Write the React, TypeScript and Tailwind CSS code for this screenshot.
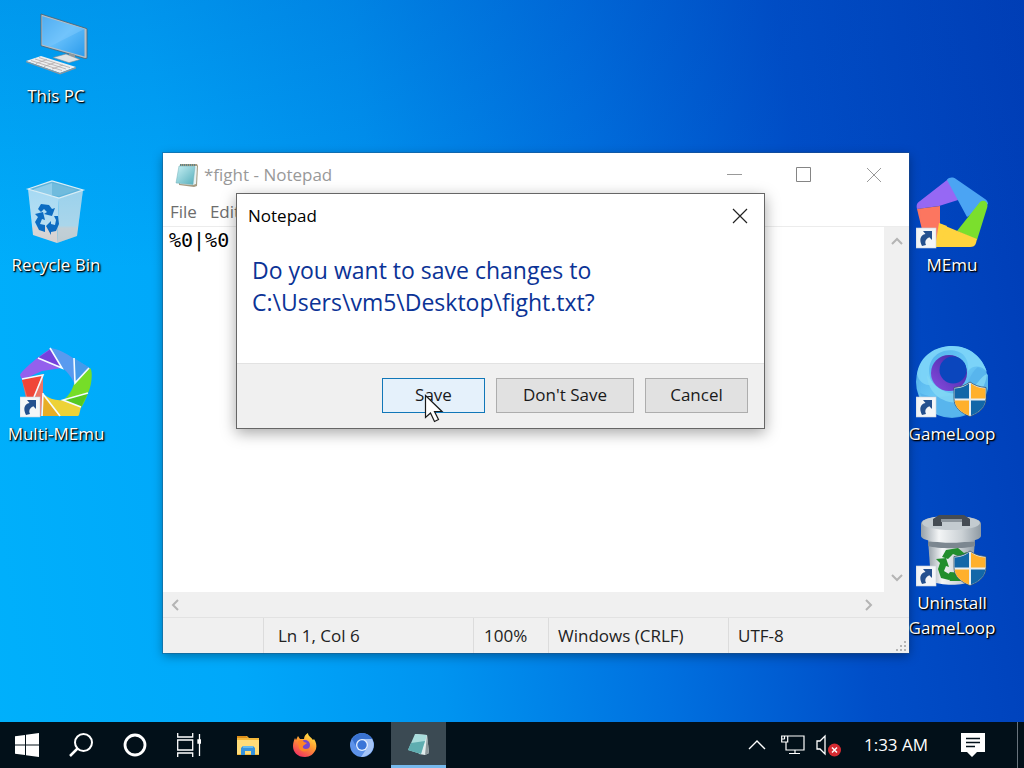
import { useState, type ReactNode } from 'react';

interface IconProps {
  className?: string;
}

interface DesktopIconProps {
  label: string;
  children: ReactNode;
}

interface TaskButtonProps {
  label: string;
  active?: boolean;
  children: ReactNode;
}

function ShortcutArrow() {
  return (
    <g>
      <rect x="0" y="51" width="20" height="20" fill="#f4f6f8" stroke="#c9d3dc" strokeWidth="0.6" />
      <path d="M6 69C3 63 4 58 9.500 57L7 54h9v9l-2.700-2.700C9.500 62 8.500 65 10 68z" fill="#24508e" />
    </g>
  );
}

function Shield() {
  return (
    <g>
      <path d="M54 36c-4 3-9 5-16 5.500v11c0 9 7 14.500 16 18 9-3.500 16-9 16-18v-11C63 41 58 39 54 36z" fill="#e8eef0" stroke="#33506b" strokeWidth="0.8" />
      <path d="M53 37.500c-4 3-8 4.500-14.400 5V52.500H53z" fill="#1267a8" />
      <path d="M55 37.500c4 3 8 4.500 14.400 5V52.500H55z" fill="#ffb02c" />
      <path d="M38.700 54.500H53v15C44.500 66 39.300 61.500 38.700 54.500z" fill="#ffb02c" />
      <path d="M69.300 54.500H55v15C63.500 66 68.700 61.500 69.300 54.500z" fill="#1267a8" />
    </g>
  );
}

function ThisPcIcon() {
  return (
    <svg viewBox="0 0 72 72" className="size-[72px]" aria-hidden="true">
      <defs>
        <linearGradient id="pc-screen" x1="0" y1="0" x2="1" y2="1">
          <stop offset="0" stopColor="#2f9bea" />
          <stop offset="0.5" stopColor="#62bdfa" />
          <stop offset="1" stopColor="#2a9bec" />
        </linearGradient>
      </defs>
      <path d="M21 6l44 14 2 .8v29.400l-2 .3-44-12.700z" fill="#b7bfc5" stroke="#4b6070" strokeWidth="0.8" />
      <path d="M22.300 8.200L64.500 21v27.500L22.300 36.500z" fill="url(#pc-screen)" />
      <path d="M22.300 8.200L64.500 21 30 38.500l-7.700-2z" fill="#8fd0ff" opacity="0.35" />
      <path d="M49 45l6 1.800v3.500l-6-1z" fill="#8d999f" />
      <path d="M33 49.500l13-3.500 14 5.500-11 3.200z" fill="#dfe3e5" stroke="#7c8992" strokeWidth="0.6" />
      <path d="M6 53l15-5 35 11-16 6z" fill="#eceeef" />
      <path d="M6 53l34 12 16-6v1.500L40 66.500 6 54.300z" fill="#8c969d" />
      <path d="M11 52.500l31 10M15 51l31 10M19 49.600l31 10M16 55.500l11-4M24 58.500l11-4M32 61l11-4" stroke="#b1a9a9" strokeWidth="0.8" fill="none" />
    </svg>
  );
}

function RecycleBinIcon() {
  return (
    <svg viewBox="0 0 72 72" className="size-[72px]" aria-hidden="true">
      <defs>
        <linearGradient id="bin-front" x1="0" y1="0" x2="0" y2="1">
          <stop offset="0" stopColor="#a5d9f3" />
          <stop offset="0.67" stopColor="#b9dff2" />
          <stop offset="0.72" stopColor="#d9d7d7" />
          <stop offset="1" stopColor="#d5d1d0" />
        </linearGradient>
      </defs>
      <path d="M8 12l24-8 31 9-24 8z" fill="#5fb4dc" />
      <path d="M13 12.500L32 6v12l-7 1z" fill="#8fcdea" />
      <path d="M32 6l25 7-18 6-7-1z" fill="#70bbdd" />
      <path d="M8 12l31 9-2 45-24-8z" fill="url(#bin-front)" />
      <path d="M39 21l24-8-6 46-20 7z" fill="url(#bin-front)" />
      <path d="M39 21l24-8-6 46-20 7z" fill="#7cbbd9" opacity="0.25" />
      <path d="M8 12l24-8 31 9-24 8z" fill="none" stroke="#d9edf5" strokeWidth="1.300" />
      {/* three chasing arrows */}
      <g fill="#0c6cc2">
        <path d="M18 32l3-5 8 1 3 4 3-1-3 8-8-2 3-2-3-3-3 3z" />
        <path d="M15 37l8-2 2 8-3-1-2 5 5 1v7l-6-2-4-8 3-5z" />
        <path d="M26 49l5-5v3l4 1 1-5-2-4 4 0 1 8-3 7-5 1v3z" />
      </g>
    </svg>
  );
}

function MultiMemuIcon() {
  return (
    <svg viewBox="0 0 72 72" className="size-[72px]" aria-hidden="true">
      <path d="M0 29C2 24 20 9 30 3l12 19-20 3-20 9z" fill="#9460ed" />
      <path d="M18 12l13-9 11 19z" fill="#7541dd" />
      <path d="M30 2c8 1 16 5 23 10l17 10-15 17c-3-7-7-13-13-17z" fill="#599aef" />
      <path d="M54 12l14 9-12 14z" fill="#469bea" />
      <path d="M70 22c3 2 2 17-2 25-2 6-5 12-7 15l-18-8c6-4 9-10 11-16z" fill="#76dd28" />
      <path d="M68 47l-7 14-18-7z" fill="#55c823" />
      <path d="M61 61l-2 8c0 1-2 1-4 1H22l1-22c7 5 13 7 20 6z" fill="#edd237" />
      <path d="M22 48l17 22H22z" fill="#e8ad26" />
      <path d="M2 34l21-6v20l-2 22H10z" fill="#ed7466" />
      <path d="M2 34l20-5-8 22-6 2z" fill="#f04638" />
      <path d="M30 2l12 20-24-10M54 12l1 25 14-15M68 47l-25 7 18 7M2 33l21-4-9 22M23 47l-1 23M23 48l17 22" fill="none" stroke="#f4fbff" strokeWidth="1.600" />
      <ShortcutArrow />
    </svg>
  );
}

function MemuIcon() {
  return (
    <svg viewBox="0 0 72 72" className="size-[72px]" aria-hidden="true">
      <path d="M1 32c-1-4 0-6 3-8L31 3c2-2 5-2 8 0l3 20-19 6z" fill="#9668f4" />
      <path d="M31 3c2-3 6-3 9-1l29 20c2 1 3 3 3 5L51 40z" fill="#4ba4f3" />
      <path d="M64 25c4-3 9 0 7 6L61 63l-20-9z" fill="#7bdf2d" />
      <path d="M22 46l39 16-1 4c-1 3-3 4-6 4H15z" fill="#ffd43e" />
      <path d="M1 32l23-3v18l-3 23h-6c-3 0-5-2-6-5z" fill="#fc7660" />
      <path d="M23 46l8 3-8 21h-4z" fill="#ffd43e" />
      <ShortcutArrow />
    </svg>
  );
}

function GameLoopIcon() {
  return (
    <svg viewBox="0 0 72 72" className="size-[72px]" aria-hidden="true">
      <defs>
        <linearGradient id="loop-ring" x1="0" y1="0" x2="1" y2="1">
          <stop offset="0" stopColor="#4ba9ec" />
          <stop offset="0.5" stopColor="#6bcaf5" />
          <stop offset="1" stopColor="#3285dc" />
        </linearGradient>
        <linearGradient id="loop-purple" x1="0" y1="1" x2="1" y2="0">
          <stop offset="0" stopColor="#8a4ce0" />
          <stop offset="1" stopColor="#39249e" />
        </linearGradient>
      </defs>
      <circle cx="36" cy="36" r="36" fill="url(#loop-ring)" />
      <path d="M1 28C4 9 20 0 36 0c18 0 30 11 35 26-6-7-14-7-19-1C54 8 41 2 28 5 14 9 9 24 17 38 9 41 3 36 1 28z" fill="#7bd3f8" />
      <path d="M4 47c13 6 31 5 42-3 7-6 8-17 16-23l10 8c4 22-12 41-34 42C22 71 9 61 4 47z" fill="#58b5ed" />
      <path d="M11 29c9 15 24 24 42 15 9-5 11-13 18-16-1 10-7 23-19 27C33 61 12 51 11 29z" fill="#84d8f5" opacity="0.8" />
      <circle cx="33" cy="27" r="18" fill="url(#loop-purple)" />
      <circle cx="37" cy="24" r="13.500" fill="#0b46bd" />
      <ShortcutArrow />
      <Shield />
    </svg>
  );
}

function UninstallIcon() {
  return (
    <svg viewBox="0 0 72 72" className="size-[72px]" aria-hidden="true">
      <defs>
        <linearGradient id="can" x1="0" y1="0" x2="1" y2="0">
          <stop offset="0" stopColor="#96a0a8" />
          <stop offset="0.3" stopColor="#f3f5f6" />
          <stop offset="0.68" stopColor="#cbd1d5" />
          <stop offset="1" stopColor="#8f9aa3" />
        </linearGradient>
      </defs>
      <path d="M12 24h47l-3 42c-8 5-32 5-41 0z" fill="url(#can)" />
      <path d="M12 27h47v4c-9 3-38 3-47 0z" fill="#7c8790" />
      <path d="M5 9c0-4 8-8 30-8s30 4 30 8v12c-1 9-59 9-60 0z" fill="url(#can)" />
      <ellipse cx="35" cy="8" rx="29" ry="7" fill="#c3cbd0" />
      <path d="M17 10V4l6-4h25l6 4v7h-8V7H26v4h-9z" fill="#454c53" />
      <path d="M25 4h21v3H25z" fill="#8d969d" />
      <g fill="#228e2d">
        <path d="M26 42l4-7 12-2 6 5 3-1-4 9-8-2 3-3-5-2-5 5z" />
        <path d="M20 44l10-1 3 9-3-1-2 5 5 3v6l-8-2-3-9 2-6z" />
        <path d="M34 57l13 1v8H34l-3-5z" />
      </g>
      <ShortcutArrow />
      <Shield />
    </svg>
  );
}

function NotepadIcon({ className }: IconProps) {
  return (
    <svg viewBox="0 0 24 24" className={className} aria-hidden="true">
      <defs>
        <linearGradient id="note-page" x1="0" y1="0" x2="1" y2="1">
          <stop offset="0" stopColor="#c7f0f4" />
          <stop offset="1" stopColor="#56aebb" />
        </linearGradient>
      </defs>
      <path d="M5 1h17l1 2-1 20-3 1-15-2z" fill="#a59b82" />
      <path d="M5 3h17l-1 18-3 1-13-1z" fill="#e6f2f3" />
      <path d="M4 3l16 .5-2 18-17-1.500z" fill="url(#note-page)" stroke="#70b0b9" strokeWidth="0.5" />
      <path d="M5 2h16" stroke="#4c7e88" strokeWidth="1.500" strokeDasharray="1 1" />
    </svg>
  );
}

function DesktopIcon({ label, children }: DesktopIconProps) {
  return (
    <button
      type="button"
      className="flex h-[169px] w-28 flex-col items-center gap-[3px] pt-2 text-[17px] leading-[25px] text-white [text-shadow:1px_1px_2px_#000,1px_1px_1px_#000]"
    >
      {children}
      <span className="w-24 text-center whitespace-nowrap">
        {label.split('\n').map((line) => (
          <span key={line} className="flex justify-center">
            {line}
          </span>
        ))}
      </span>
    </button>
  );
}

function TaskButton({ label, active, children }: TaskButtonProps) {
  return (
    <button
      type="button"
      aria-label={label}
      className={
        active
          ? 'flex w-[55px] items-center justify-center border-b-3 border-[#76b9ed] bg-[#3b4a53] pt-[3px]'
          : 'flex w-[55px] items-center justify-center'
      }
    >
      {children}
    </button>
  );
}

function NotepadWindow() {
  const [text, setText] = useState('%0|%0');

  return (
    <section
      aria-label="fight - Notepad"
      className="absolute top-[153px] left-[163px] flex h-[500px] w-[746px] flex-col bg-white text-[17px] shadow-[0_0_0_1px_rgba(40,80,120,0.4),0_3px_10px_rgba(0,0,0,0.35)]"
    >
      <header className="flex h-11 items-center justify-between pl-3 text-[#999]">
        <div className="flex items-center gap-[5px]">
          <NotepadIcon className="size-6" />
          <h1>*fight - Notepad</h1>
        </div>
        <div className="flex self-stretch">
          <button type="button" aria-label="Minimize" className="flex w-[68px] items-center justify-center">
            <svg viewBox="0 0 16 16" className="size-4" stroke="currentColor">
              <path d="M0 7.500h15" />
            </svg>
          </button>
          <button type="button" aria-label="Maximize" className="flex w-[70px] items-center justify-center">
            <svg viewBox="0 0 16 16" className="size-4" fill="none" stroke="#858585">
              <path d="M.5.5h14v14H.5z" />
            </svg>
          </button>
          <button type="button" aria-label="Close" className="flex w-[70px] items-center justify-center">
            <svg viewBox="0 0 16 16" className="size-4" stroke="currentColor">
              <path d="M1 1l14 14M15 1L1 15" />
            </svg>
          </button>
        </div>
      </header>

      <nav className="flex h-[30px] items-center gap-[13px] border-b border-[#ececec] pl-[7px] text-[#6d6d6d]">
        <button type="button">File</button>
        <button type="button">Edit</button>
      </nav>

      <div className="flex min-h-0 flex-1">
        <textarea
          aria-label="Document text"
          value={text}
          onChange={(e) => setText(e.target.value)}
          spellCheck={false}
          className="flex-1 resize-none overflow-hidden pl-[6px] font-['DejaVu_Sans_Mono',monospace] text-[20px] leading-[26px] text-black outline-none"
        />
        <div className="flex w-[25px] flex-col items-center justify-between bg-[#f0f0f0] py-2 text-[#b4b4b4]">
          <button type="button" aria-label="Scroll up">
            <svg viewBox="0 0 12 12" className="size-3" fill="none" stroke="currentColor" strokeWidth="2">
              <path d="M1 9l5-5 5 5" />
            </svg>
          </button>
          <button type="button" aria-label="Scroll down">
            <svg viewBox="0 0 12 12" className="size-3" fill="none" stroke="currentColor" strokeWidth="2">
              <path d="M1 3l5 5 5-5" />
            </svg>
          </button>
        </div>
      </div>

      <div className="flex h-[25px] items-center justify-between bg-[#f0f0f0] pr-[34px] pl-[6px] text-[#b4b4b4]">
        <button type="button" aria-label="Scroll left">
          <svg viewBox="0 0 12 12" className="size-3" fill="none" stroke="currentColor" strokeWidth="2">
            <path d="M9 1L4 6l5 5" />
          </svg>
        </button>
        <button type="button" aria-label="Scroll right">
          <svg viewBox="0 0 12 12" className="size-3" fill="none" stroke="currentColor" strokeWidth="2">
            <path d="M3 1l5 5-5 5" />
          </svg>
        </button>
      </div>

      <footer className="flex h-9 border-t border-[#e2e2e2] bg-[#f0f0f0] leading-9 text-[#222]">
        <span className="w-[101px] border-r border-[#dcdcdc]" />
        <span className="w-[210px] border-r border-[#dcdcdc] pl-[14px]">Ln 1, Col 6</span>
        <span className="w-[75px] border-r border-[#dcdcdc] pl-[10px]">100%</span>
        <span className="w-[180px] border-r border-[#dcdcdc] pl-[9px]">Windows (CRLF)</span>
        <span className="flex-1 pl-[9px]">UTF-8</span>
        <svg viewBox="0 0 12 12" className="mr-px size-3 self-end" fill="#b5b5b5" aria-hidden="true">
          <path d="M8 0h2v2H8zM8 4h2v2H8zM4 4h2v2H4zM8 8h2v2H8zM4 8h2v2H4zM0 8h2v2H0z" />
        </svg>
      </footer>
    </section>
  );
}

function SaveDialog() {
  return (
    <div
      role="dialog"
      aria-labelledby="dialog-title"
      className="absolute top-[193px] left-[236px] flex h-[236px] w-[529px] flex-col border border-[#666] bg-white shadow-[0_4px_14px_rgba(0,0,0,0.35)]"
    >
      <header className="flex h-11 items-center justify-between pr-4 pl-[11px] text-[17px]">
        <h2 id="dialog-title">Notepad</h2>
        <button type="button" aria-label="Close">
          <svg viewBox="0 0 16 16" className="size-4" stroke="#222" strokeWidth="1.200">
            <path d="M1 1l14 14M15 1L1 15" />
          </svg>
        </button>
      </header>
      <p className="flex-1 px-[15px] pt-4 text-[23px] leading-8 text-[#0b3396]">
        Do you want to save changes to
        <br />
        C:\Users\vm5\Desktop\fight.txt?
      </p>
      <footer className="flex h-[65px] items-center justify-end gap-[11px] border-t border-[#e2e2e2] bg-[#f0f0f0] pr-4 pb-0.5 text-[17px] text-[#1a1a1a]">
        <button type="button" className="h-[35px] w-[103px] border border-[#1177b8] bg-[#e5f1fb]">
          Save
        </button>
        <button type="button" className="h-[35px] w-[138px] border border-[#adadad] bg-[#e1e1e1]">
          Don't Save
        </button>
        <button type="button" className="h-[35px] w-[103px] border border-[#adadad] bg-[#e1e1e1]">
          Cancel
        </button>
      </footer>
    </div>
  );
}

function Taskbar() {
  return (
    <footer className="flex h-[46px] justify-between bg-[#021019] text-white">
      <div className="flex">
        <button type="button" aria-label="Start" className="flex w-[54px] items-center justify-center">
          <svg viewBox="0 0 24 24" className="size-6" fill="white">
            <path d="M0 3.300l10-1.400v9.600H0zM11 1.800L24 0v11.500H11zM0 12.500h10v9.600L0 20.700zM11 12.500h13V24l-13-1.800z" />
          </svg>
        </button>
        <button type="button" aria-label="Search" className="flex w-[54px] items-center justify-center">
          <svg viewBox="0 0 24 24" className="size-6" fill="none" stroke="white" strokeWidth="2">
            <circle cx="14.500" cy="9.500" r="8.500" />
            <path d="M8.500 15.500L1 23" strokeWidth="2.500" />
          </svg>
        </button>
        <button type="button" aria-label="Cortana" className="flex w-[54px] items-center justify-center">
          <svg viewBox="0 0 24 24" className="size-6" fill="none" stroke="white" strokeWidth="2.800">
            <circle cx="12" cy="12" r="10" />
          </svg>
        </button>
        <button type="button" aria-label="Task View" className="flex w-[54px] items-center justify-center">
          <svg viewBox="0 0 24 24" className="size-6" fill="none" stroke="white" strokeWidth="1.300">
            <path d="M.7 0v4h15V0M.7 24v-4h15v4M.7 7h15v10H.7zM22.500 1v22" />
            <path d="M21 7h3v3h-3z" fill="white" />
          </svg>
        </button>

        <div className="ml-1 flex gap-0.5">
          <TaskButton label="File Explorer">
            <svg viewBox="0 0 24 24" className="size-6">
              <path d="M1 3h10l2 2h10v17H1z" fill="#f4b93b" />
              <path d="M1 3h9l2 2H1z" fill="#dc8e1b" />
              <path d="M1 7h22v14H1z" fill="#ffdc78" />
              <path d="M5 22v-7l2-2h10l2 2v7h-4v-4H9v4z" fill="#3692dc" />
              <path d="M7 13h10v2H7z" fill="#64bbee" />
            </svg>
          </TaskButton>
          <TaskButton label="Firefox">
            <svg viewBox="0 0 24 24" className="size-6">
              <defs>
                <linearGradient id="fox" x1="0.8" y1="0" x2="0.2" y2="1">
                  <stop offset="0" stopColor="#ffeb48" />
                  <stop offset="0.45" stopColor="#ff9831" />
                  <stop offset="1" stopColor="#f22a65" />
                </linearGradient>
              </defs>
              <path d="M2 5l1 2 2-4 2 3h4c0-3 2-5 4-6 0 3 3 4 5 7l1-1c2 3 3 6 2 10-2 5-6 8-11 8C4 24 0 19 0 13c0-3 1-6 2-8z" fill="url(#fox)" />
              <circle cx="12" cy="12" r="5" fill="#7547cf" />
              <path d="M5 8c3-2 5-1 6 1l3 1-4 3c-1 3 3 4 6 2-1 4-8 5-10 0z" fill="#ff8527" />
            </svg>
          </TaskButton>
          <TaskButton label="Chromium">
            <svg viewBox="0 0 24 24" className="size-6">
              <circle cx="12" cy="12" r="12" fill="#5d92e9" />
              <path d="M2 6C7-2 18-2 22 6H12L7 15z" fill="#3871d0" />
              <path d="M22 6c5 9-2 18-11 18l6-9c1-4-1-7-5-9z" fill="#a4c4f7" />
              <circle cx="12" cy="12" r="6" fill="#e5f0ff" />
              <circle cx="12" cy="12" r="4.700" fill="#3975d8" />
            </svg>
          </TaskButton>
          <TaskButton label="Notepad" active>
            <svg viewBox="0 0 24 24" className="size-6">
              <path d="M8 1l12 1 2 18-4 2-6-1z" fill="#e1eded" />
              <path d="M20 2l2 18-4 2z" fill="#8f9a9d" />
              <path d="M8 1l12 1-6 19L1 17z" fill="#a9dcdc" />
              <path d="M4 10l14-2-4 13L1 17z" fill="#5fadb0" />
            </svg>
          </TaskButton>
        </div>
      </div>

      <div className="flex">
        <button type="button" aria-label="Show hidden icons" className="flex w-9 items-center justify-center">
          <svg viewBox="0 0 18 12" className="h-3 w-[18px]" fill="none" stroke="white" strokeWidth="1.400">
            <path d="M1 10l8-8 8 8" />
          </svg>
        </button>
        <button type="button" aria-label="Network" className="flex w-9 items-center justify-center">
          <svg viewBox="0 0 24 24" className="size-6" fill="none" stroke="white" strokeWidth="1.200">
            <path d="M7 3h16v14H5V9M14 17v3M8 20.500h11M.7 3h6v6h-6zM3.500 3v3M.7 6h3" />
          </svg>
        </button>
        <button type="button" aria-label="Volume muted" className="flex w-9 items-center justify-center">
          <svg viewBox="0 0 26 24" className="h-6 w-[26px]">
            <path d="M1 8v8h3l5 5V3L4 8z" fill="none" stroke="white" strokeWidth="1.300" />
            <circle cx="18.500" cy="17" r="6.500" fill="#d52b32" />
            <path d="M16 14.500l5 5M21 14.500l-5 5" stroke="white" strokeWidth="1.500" />
          </svg>
        </button>
        <button type="button" className="w-[98px] text-center text-[17px]">
          1:33 AM
        </button>
        <button type="button" aria-label="Notifications" className="mr-4 flex w-14 items-center justify-center">
          <svg viewBox="0 0 24 24" className="size-6">
            <path d="M0 0h24v19h-8l-5 5-5-5H0z" fill="white" />
            <path d="M5 5.500h14M5 9.500h14M5 13.500h9" stroke="#021019" strokeWidth="1.300" />
          </svg>
        </button>
        <button type="button" aria-label="Show desktop" className="w-[7px] border-l border-[#68737c]" />
      </div>
    </footer>
  );
}

export default function App() {
  return (
    <div className="flex h-screen flex-col overflow-hidden bg-[linear-gradient(180deg,rgba(0,70,180,0.2)_0%,rgba(0,70,180,0)_35%),linear-gradient(82deg,#00b0fb_0%,#00a8fa_22%,#0094f0_40%,#0070df_60%,#004ec8_78%,#003cb6_100%)] font-['Open_Sans',sans-serif]">
      <main className="relative flex min-h-0 flex-1 justify-between pr-4">
        <div className="flex flex-col">
          <DesktopIcon label="This PC">
            <ThisPcIcon />
          </DesktopIcon>
          <DesktopIcon label="Recycle Bin">
            <RecycleBinIcon />
          </DesktopIcon>
          <DesktopIcon label="Multi-MEmu">
            <MultiMemuIcon />
          </DesktopIcon>
        </div>
        <div className="flex flex-col pt-[169px]">
          <DesktopIcon label="MEmu">
            <MemuIcon />
          </DesktopIcon>
          <DesktopIcon label="GameLoop">
            <GameLoopIcon />
          </DesktopIcon>
          <DesktopIcon label={'Uninstall\nGameLoop'}>
            <UninstallIcon />
          </DesktopIcon>
        </div>

        <NotepadWindow />
        <SaveDialog />

        {/* mouse pointer */}
        <svg viewBox="0 0 20 30" className="pointer-events-none absolute top-[394px] left-[424px] h-[30px] w-5" aria-hidden="true">
          <path d="M1.500 1.500v22l5-4.500 4 8.500 4-2-4-8h7.500z" fill="white" stroke="#1a1a1a" strokeWidth="1.200" />
        </svg>
      </main>
      <Taskbar />
    </div>
  );
}
